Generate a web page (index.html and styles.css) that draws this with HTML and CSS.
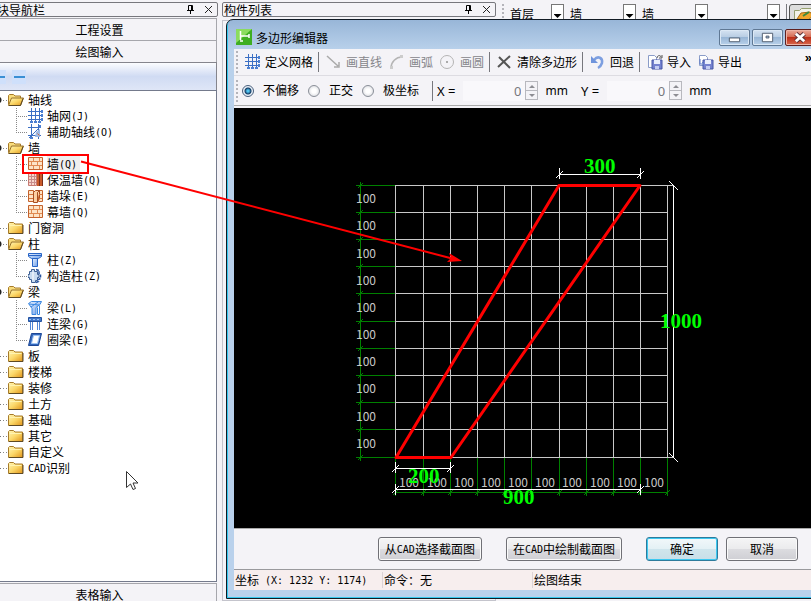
FILE: index.html
```html
<!DOCTYPE html>
<html lang="zh-CN">
<head>
<meta charset="utf-8">
<title>多边形编辑器</title>
<link rel="stylesheet" href="styles.css">
</head>
<body>
<svg class="defs" aria-hidden="true">
  <defs>
    <linearGradient id="gold" x1="0" y1="0" x2="1" y2="1"><stop offset="0" stop-color="#fff6b8"/><stop offset=".5" stop-color="#fbd768"/><stop offset="1" stop-color="#e0941a"/></linearGradient>
    <linearGradient id="blue" x1="0" y1="0" x2="1" y2="1"><stop offset="0" stop-color="#e6f1ff"/><stop offset="1" stop-color="#6f9fe8"/></linearGradient>
    <symbol id="closed" viewBox="0 0 16 16"><path d="M.5 13.500V3.500l1-1h4l1.500 1.500h7.500v9.500z" fill="url(#gold)" stroke="#a77b2a"/><path d="M1.500 5.500h12" stroke="#fff3b0"/><path d="M1 13.500h14V5" fill="none" stroke="#5e4a24"/></symbol>
    <symbol id="open" viewBox="0 0 16 16"><path d="M.5 12.500V3.500l1-1h4l1.500 1.500h5.500v2" fill="#f8dc7c" stroke="#a77b2a"/><path d="M.5 13.500l3-7.500h12l-3 7.500z" fill="url(#gold)" stroke="#96702a"/><path d="M1 13.500h11.500l2.500-7" fill="none" stroke="#5e4a24"/></symbol>
    <symbol id="grid" viewBox="0 0 16 16"><path d="M0 3.500h14M0 7.500h14M0 11.500h14M3.500 0v15M7.500 0v15M11.500 0v15" stroke="#3b6fc4" fill="none"/><path d="M13 2h2v3h-2zM13 6h2v3h-2zM13 10h2v3h-2zM2 13h3v2H2zM6 13h3v2H6zM10 13h3v2h-3z" fill="#4b7fd2"/></symbol>
    <symbol id="aux" viewBox="0 0 16 16"><path d="M0 3.500h13M0 11.500h13M3.500 0v15M10.500 0v15M1 14L12 3" stroke="#3b6fc4" fill="none"/><path d="M8 8l4-3v8H7z" fill="#9db9e4"/><path d="M9.500 9.500l2 2" stroke="#d0693c"/><path d="M2 13h3v2H2zM11 1h2v3h-2z" fill="#4b7fd2"/></symbol>
    <symbol id="brick" viewBox="0 0 16 16"><path d="M.5 1.500h14v12H.5z" fill="#fde3c6" stroke="#c4622c"/><path d="M1 5.500h13M1 9.500h13M5.500 2v3M11.500 2v3M3.500 6v3M9.500 6v3M5.500 10v3M11.500 10v3" stroke="#e08a52" fill="none"/></symbol>
    <symbol id="insul" viewBox="0 0 16 16"><path d="M.5 1.500h8v12h-8z" fill="#f7d6cc" stroke="#c77a72"/><path d="M1 4.500h7M1 7.500h7M1 10.500h7M3.500 2v11M6.500 2v11" stroke="#c88c8c"/><path d="M9 1h2v13H9zM12 1h2v13h-2z" fill="#c95b2c"/><path d="M11.500 1v13M14.500 1v13" stroke="#7a2e1a"/></symbol>
    <symbol id="pier" viewBox="0 0 16 16"><path d="M.5 2.500h5v11h-5zM10.500 2.500h4v11h-4z" fill="#fde3c6" stroke="#c4622c"/><path d="M5.500 4.500l2-2h4l-2 2v10h-4zM9.500 4.500l2-2v9" fill="#fbd0a4" stroke="#a94e22"/><path d="M1 6.500h4M1 10.500h4M11 6.500h3M11 10.500h3" stroke="#d87840"/></symbol>
    <symbol id="column" viewBox="0 0 16 16"><path d="M.5 1.500h13v3l-3 2h-7l-3-2z" fill="url(#blue)" stroke="#2764c6"/><path d="M4.500 6.500h5v8h-5z" fill="url(#blue)" stroke="#2764c6"/><path d="M1 3.500h12" stroke="#2764c6"/></symbol>
    <symbol id="tie" viewBox="0 0 16 16"><path d="M3.500 1.500h3v2h3v3h1.500v3H9.500v3h-2v2h-4v-3h-2v-2H0v-3h1.500v-3h2z" fill="#c9dbf0" stroke="#3d5f94"/><path d="M8 1.500l3 1v3l1.500 1v4l-2 1v2l-2.500 1" stroke="#24529f" stroke-width="1.500" stroke-dasharray="3 1" fill="none"/><path d="M5 4v8" stroke="#fff" fill="none"/></symbol>
    <symbol id="beam" viewBox="0 0 16 16"><path d="M.5 3.500l3-2h10l-1.500 3-4 3v7h-4v-6z" fill="url(#blue)" stroke="#3a87e0"/><path d="M1 4l10 1M9.500 7.500v7h2v-9M3 7l7-5" stroke="#3a87e0" fill="none"/></symbol>
    <symbol id="link" viewBox="0 0 16 16"><path d="M.5 1.500h13v4H.5z" fill="#3f77cb" stroke="#24529f"/><path d="M1 3.500h12" stroke="#9cc2f2" stroke-dasharray="2 2"/><path d="M2.500 6v8M4.500 6v8M9.500 6v8M11.500 6v8" stroke="#4f87d8"/></symbol>
    <symbol id="ring" viewBox="0 0 16 16"><path d="M3.500 1.500h10l-3 12H.5z" fill="#3468bd" stroke="#1c4796"/><path d="M5.500 3.500h6l-2 8h-6z" fill="#fff" stroke="#9cc2f2"/></symbol>
    <symbol id="pin" viewBox="0 0 9 9"><path d="M2.500 5V.5h4V5M5.500 1v4M1 5.500h7M4.500 6v3" stroke="#000" fill="none"/></symbol>
    <symbol id="shut" viewBox="0 0 9 9"><path d="M1 1l7 7M8 1L1 8" stroke="#222" fill="none"/></symbol>
    <symbol id="disk" viewBox="0 0 16 16"><path d="M5 6h10v9H5z" fill="#7582cf" stroke="#4656a6"/><path d="M7 6h6v4H7z" fill="#e8eefc"/><path d="M8 12h4v3H8z" fill="#c4cdf2"/></symbol>
  </defs>
</svg>
<div class="app">
  <aside class="sidebar">
    <header class="panel-head"><span>模块导航栏</span>
      <button class="tiny" aria-label="固定"><svg><use href="#pin"/></svg></button><button class="tiny" aria-label="关闭"><svg><use href="#shut"/></svg></button></header>
    <button class="section">工程设置</button>
    <button class="section">绘图输入</button>
    <div class="treebar"><button class="fold" aria-label="展开"></button><button class="fold" aria-label="折叠"></button></div>
    <nav class="tree">
      <ul>
        <li><div class="row opened"><i></i><svg><use href="#open"/></svg><span>轴线</span></div>
          <ul>
            <li><svg><use href="#grid"/></svg><span>轴网<kbd>(J)</kbd></span></li>
            <li><svg><use href="#aux"/></svg><span>辅助轴线<kbd>(O)</kbd></span></li>
          </ul></li>
        <li><div class="row opened"><i></i><svg><use href="#open"/></svg><span>墙</span></div>
          <ul>
            <li><svg><use href="#brick"/></svg><span class="picked">墙<kbd>(Q)</kbd></span></li>
            <li><svg><use href="#insul"/></svg><span>保温墙<kbd>(Q)</kbd></span></li>
            <li><svg><use href="#pier"/></svg><span>墙垛<kbd>(E)</kbd></span></li>
            <li><svg><use href="#brick"/></svg><span>幕墙<kbd>(Q)</kbd></span></li>
          </ul></li>
        <li><div class="row"><i></i><svg><use href="#closed"/></svg><span>门窗洞</span></div></li>
        <li><div class="row opened"><i></i><svg><use href="#open"/></svg><span>柱</span></div>
          <ul>
            <li><svg><use href="#column"/></svg><span>柱<kbd>(Z)</kbd></span></li>
            <li><svg><use href="#tie"/></svg><span>构造柱<kbd>(Z)</kbd></span></li>
          </ul></li>
        <li><div class="row opened"><i></i><svg><use href="#open"/></svg><span>梁</span></div>
          <ul>
            <li><svg><use href="#beam"/></svg><span>梁<kbd>(L)</kbd></span></li>
            <li><svg><use href="#link"/></svg><span>连梁<kbd>(G)</kbd></span></li>
            <li><svg><use href="#ring"/></svg><span>圈梁<kbd>(E)</kbd></span></li>
          </ul></li>
        <li><div class="row"><i></i><svg><use href="#closed"/></svg><span>板</span></div></li>
        <li><div class="row"><i></i><svg><use href="#closed"/></svg><span>楼梯</span></div></li>
        <li><div class="row"><i></i><svg><use href="#closed"/></svg><span>装修</span></div></li>
        <li><div class="row"><i></i><svg><use href="#closed"/></svg><span>土方</span></div></li>
        <li><div class="row"><i></i><svg><use href="#closed"/></svg><span>基础</span></div></li>
        <li><div class="row"><i></i><svg><use href="#closed"/></svg><span>其它</span></div></li>
        <li><div class="row"><i></i><svg><use href="#closed"/></svg><span>自定义</span></div></li>
        <li><div class="row"><i></i><svg><use href="#closed"/></svg><span><kbd>CAD</kbd>识别</span></div></li>
      </ul>
    </nav>
    <button class="section">表格输入</button>
  </aside>
  <section class="list-panel">
    <header class="panel-head"><span>构件列表</span>
      <button class="tiny" aria-label="固定"><svg><use href="#pin"/></svg></button><button class="tiny" aria-label="关闭"><svg><use href="#shut"/></svg></button></header>
    <div class="list-body"></div>
  </section>
  <section class="work">
    <div class="combos">
      <span class="grip"></span>
      <label class="combo"><select aria-label="楼层"><option>首层</option></select><b></b></label>
      <label class="combo"><select aria-label="构件类别"><option>墙</option></select><b></b></label>
      <label class="combo"><select aria-label="构件类型"><option>墙</option></select><b></b></label>
      <label class="combo"><select aria-label="构件名称"><option></option></select><b></b></label>
      <span class="rule"></span>
      <button class="edit" aria-label="编辑"><svg viewBox="0 0 22 20"><path d="M1.500 4.500h5l2-2h11v12h-18z" fill="#f2f2e8" stroke="#96a070"/><path d="M4 13l4-6 9-1 3 4-5 4z" fill="#f0a52c" stroke="#a86a12"/><path d="M10 10l6-4" stroke="#3b8a3b" stroke-width="2"/></svg></button>
    </div>
  </section>

  <section class="dialog" role="dialog" aria-label="多边形编辑器">
    <header class="title">
      <svg class="logo" viewBox="0 0 16 16"><path d="M0 0h16v16H0z" fill="#3fae22"/><path d="M0 0h16L0 14z" fill="#8bdc5e"/><path d="M4.500 2v9M5 7h8M4 12h3M13 5v4" stroke="#fff" stroke-width="1.500" fill="none"/></svg>
      <h1>多边形编辑器</h1>
      <div class="winbtns">
        <button aria-label="最小化"><svg viewBox="0 0 30 16"><path d="M9.500 8.500h11v4h-11z" fill="#fff" stroke="#4c5a6c"/></svg></button>
        <button aria-label="最大化"><svg viewBox="0 0 30 16"><path d="M9.500 3.500h11v9h-11z" fill="#fff" stroke="#4c5a6c"/><path d="M13.500 6.500h3v2h-3z" fill="#a9c1dc" stroke="#4c5a6c"/></svg></button>
        <button class="close" aria-label="关闭"><svg viewBox="0 0 30 16"><path d="M10 4l9 8M19 4l-9 8" stroke="#5a3038" stroke-width="5"/><path d="M10 4l9 8M19 4l-9 8" stroke="#fff" stroke-width="3"/></svg></button>
      </div>
    </header>
    <div class="client">
      <div class="tools">
        <span class="grip"></span>
        <button><svg><use href="#grid"/></svg>定义网格</button>
        <span class="rule"></span>
        <button disabled><svg viewBox="0 0 16 16"><path d="M1 2l11 10M13 8v5H8" stroke="#aaa" stroke-width="1.500" fill="none"/></svg>画直线</button>
        <button disabled><svg viewBox="0 0 16 16"><path d="M2 14C2 8 7 3 13 3" stroke="#b4b4b4" stroke-width="1.500" fill="none"/><path d="M1 12h3v3H1zM11 1h3v3h-3z" fill="#ccc"/></svg>画弧</button>
        <button disabled><svg viewBox="0 0 16 16"><circle cx="7" cy="8" r="6.500" stroke="#b4b4b4" fill="none"/><path d="M6 7h2v2H6z" fill="#aaa"/></svg>画圆</button>
        <span class="rule"></span>
        <button><svg viewBox="0 0 16 16"><path d="M2 3l11 11M13 2L1 13" stroke="#555" stroke-width="2" fill="none"/></svg>清除多边形</button>
        <span class="rule"></span>
        <button><svg viewBox="0 0 16 16"><path d="M4 6c4-5 9-2 8 3-1 3-2 4-4 5" stroke="#7d9fe0" stroke-width="2.500" fill="none"/><path d="M1 2v7h7z" fill="#6f94dc"/></svg>回退</button>
        <span class="rule"></span>
        <button><svg viewBox="0 0 16 16"><path d="M1.500 1.500h6l2 2v10h-8z" fill="#fff" stroke="#8a9cc8"/><use href="#disk"/><path d="M10 4c0-3 4-3 4-1M15 1v3h-3" stroke="#555" fill="none"/></svg>导入</button>
        <button><svg viewBox="0 0 16 16"><path d="M1.500 1.500h6l2 2v8h-8z" fill="#fff" stroke="#8a9cc8"/><use href="#disk"/><path d="M2 5v5h4M4 8l2 2-2 2" stroke="#5c7bc8" fill="none"/></svg>导出</button>
        <button class="more" aria-label="更多">»</button>
      </div>
      <form class="tools offset">
        <span class="grip"></span>
        <label><input type="radio" name="m" checked>不偏移</label>
        <label><input type="radio" name="m">正交</label>
        <label><input type="radio" name="m">极坐标</label>
        <span class="rule"></span>
        <label class="num">X = <input type="text" value="0" disabled></label><span class="spin"><button type="button" disabled aria-label="X 增加"></button><button type="button" disabled aria-label="X 减少"></button></span><span class="unit">mm</span>
        <label class="num">Y = <input type="text" value="0" disabled></label><span class="spin"><button type="button" disabled aria-label="Y 增加"></button><button type="button" disabled aria-label="Y 减少"></button></span><span class="unit">mm</span>
      </form>
      <div class="canvas">
        <svg viewBox="234 108 584 420" preserveAspectRatio="xMinYMin meet">
          <g fill="none" shape-rendering="crispEdges">
            <path stroke="#008000" d="M360.500 182v279M356 185.500h39M356 212.500h39M356 239.500h39M356 266.500h39M356 293.500h39M356 321.500h39M356 348.500h39M356 375.500h39M356 402.500h39M356 429.500h39M356 457.500h39M395 492.500h273M395.500 458v38M423.500 458v38M450.500 458v38M477.500 458v38M504.500 458v38M531.500 458v38M559.500 458v38M586.500 458v38M613.500 458v38M640.500 458v38M667.500 458v38"/>
            <path stroke="#008000" d="M358 188l5-5M358 215l5-5M358 242l5-5M358 269l5-5M358 296l5-5M358 324l5-5M358 351l5-5M358 378l5-5M358 405l5-5M358 432l5-5M358 460l5-5M393 495l5-5M421 495l5-5M448 495l5-5M475 495l5-5M502 495l5-5M529 495l5-5M557 495l5-5M584 495l5-5M611 495l5-5M638 495l5-5M665 495l5-5"/>
            <path stroke="#c8c8c8" d="M395 185.500h278M395 212.500h273M395 239.500h273M395 266.500h273M395 293.500h273M395 321.500h273M395 348.500h273M395 375.500h273M395 402.500h273M395 429.500h273M395 457.500h278M395.500 185v273M423.500 185v273M450.500 185v273M477.500 185v273M504.500 185v273M531.500 185v273M559.500 185v273M586.500 185v273M613.500 185v273M640.500 185v273M667.500 185v273"/>
          </g>
          <g class="dim">
            <text x="356" y="203">100</text><text x="356" y="230">100</text><text x="356" y="258">100</text><text x="356" y="285">100</text><text x="356" y="312">100</text><text x="356" y="339">100</text><text x="356" y="366">100</text><text x="356" y="393">100</text><text x="356" y="421">100</text><text x="356" y="448">100</text>
            <text x="399" y="487">100</text><text x="427" y="487">100</text><text x="454" y="487">100</text><text x="481" y="487">100</text><text x="508" y="487">100</text><text x="535" y="487">100</text><text x="562" y="487">100</text><text x="590" y="487">100</text><text x="617" y="487">100</text><text x="644" y="487">100</text>
          </g>
          <path fill="none" stroke="#fff" shape-rendering="crispEdges" d="M559 174.500h82M559.500 168v11M640.500 168v11M556 178l7-7M637 178l7-7M673.500 185v273M669 181l9 9M669 453l9 9M395 468.500h56M395.500 462v11M450.500 462v11M392 472l7-7M447 472l7-7M395 489.500h246M395.500 484v11M640.500 484v11M392 493l7-7M637 493l7-7"/>
          <path fill="none" stroke="#f00" stroke-width="3" stroke-linejoin="round" d="M396 457.500L559 185.500H640L451 457.500z"/>
          <g class="size"><text x="584" y="173">300</text><text x="660" y="328">1000</text><text x="408" y="483">200</text><text x="503" y="504">900</text></g>
        </svg>
      </div>
      <div class="actions">
        <button class="wide">从<kbd>CAD</kbd>选择截面图</button>
        <button class="wide">在<kbd>CAD</kbd>中绘制截面图</button>
        <div class="pair"><button class="ok">确定</button><button>取消</button></div>
      </div>
      <footer class="status">
        <span>坐标<kbd> (X: 1232 Y: 1174)</kbd></span>
        <span>命令：无</span>
        <span>绘图结束</span>
      </footer>
    </div>
  </section>

  <svg class="note" viewBox="0 0 480 280" aria-hidden="true"><path d="M23 155h65v18H23z" fill="none" stroke="#f00" stroke-width="2"/><path d="M81 161.500L452 258.500" stroke="#f00" stroke-width="2"/><path d="M449 253l13 8-15 1 4-4z" fill="#f00"/></svg>
  <svg class="pointer" viewBox="0 0 13 20" aria-hidden="true"><path d="M.5.5v16l4-3.500 2.500 5.500 2.500-1-2.500-5.500h5z" fill="#fff" stroke="#333"/></svg>
</div>
</body>
</html>
```
FILE: styles.css
```css
* { box-sizing: border-box; }
html, body { height: 100%; }
body {
  margin: 0;
  overflow: hidden;
  font: 12px/16px "Noto Sans CJK SC", sans-serif;
  color: #000;
  background: #f4f3f7;
}
button, input, select { font: inherit; color: inherit; margin: 0; padding: 0; border: 0; background: none; }
svg { display: block; flex: none; }
kbd { font: 10px/12px "DejaVu Sans Mono", monospace; white-space: pre; vertical-align: 1px; }
ul { list-style: none; margin: 0; padding: 0; }
.defs { position: absolute; width: 0; height: 0; }
.app { position: relative; display: flex; height: 100%; overflow: hidden; }

/* docked panels */
.sidebar { flex: none; display: flex; flex-direction: column; width: 235px; margin: 0 0 -4px -17px; padding-top: 2px; }
.panel-head {
  display: flex;
  align-items: center;
  height: 15px;
  flex: none;
  padding: 0 4px 0 1px;
  border: 1px solid #77777d;
  border-radius: 2px;
}
.panel-head span { flex: 1; }
.tiny { width: 9px; height: 9px; margin-left: 9px; }
.tiny svg { width: 9px; height: 9px; }
.section {
  flex: none;
  height: 22px;
  margin-right: 1px;
  border-top: 1px solid #a6a6ac;
  border-right: 1px solid #a6a6ac;
  text-align: center;
}
.section:first-of-type { margin-top: 1px; }
.tree + .section { margin-top: 1px; }
.treebar {
  flex: none;
  display: flex;
  gap: 6px;
  align-items: center;
  height: 28px;
  padding-left: 9px;
  margin-right: 1px;
  border-top: 1px solid #85858d;
  border-right: 1px solid #85858d;
  background: linear-gradient(#fbfcff, #d0dbf3 50%, #dfe6f7);
}
.fold { width: 14px; height: 14px; background: linear-gradient(#3a8fd4, #3a8fd4) center / 11px 2px no-repeat #cfe0fb; }
.tree {
  flex: 1;
  min-height: 0;
  margin-right: 1px;
  padding: 1px 0 0 10px;
  background: #fff;
  border: 1px solid #747a8c;
}
.row, .tree li li { display: flex; align-items: center; height: 16px; white-space: nowrap; }
.tree svg { width: 16px; height: 16px; margin-right: 4px; }
.row i {
  width: 14px;
  height: 9px;
  background: linear-gradient(#777, #777) 4px 4px / 3px 1px no-repeat, repeating-linear-gradient(90deg, #888 0 1px, #fff 1px 3px) 9px 4px / 5px 1px no-repeat;
}
.row.opened i { background: radial-gradient(circle at 4px 4px, #222 3px, transparent 4px), repeating-linear-gradient(90deg, #888 0 1px, #fff 1px 3px) 9px 4px / 5px 1px no-repeat; }
.tree li li { padding-left: 22px; }
.tree li li::before {
  content: "";
  width: 12px;
  height: 16px;
  background: repeating-linear-gradient(#888 0 1px, #fff 1px 2px) 0 0 / 1px 16px no-repeat, repeating-linear-gradient(90deg, #888 0 1px, #fff 1px 2px) 0 8px / 11px 1px no-repeat;
}
.tree li li:last-child::before { background-size: 1px 8px, 11px 1px; }
.tree li li svg { margin-right: 3px; }
.picked { background: #efefef; padding-right: 3px; }
.list-panel { flex: none; display: flex; flex-direction: column; width: 274px; margin-left: 4px; padding-top: 2px; }
.list-body { flex: 1; margin-top: 3px; border: 1px solid #c4c4cc; }
.work { flex: 1; min-width: 0; }

.combos { display: flex; align-items: flex-start; gap: 6px; padding: 4px 0 0 6px; height: 30px; width: 340px; }
.combos .grip { height: 20px; }
.combo { display: flex; width: 66px; height: 22px; flex: none; }
.combo:first-of-type { width: 54px; }
.combo select { flex: 1; min-width: 0; height: 20px; appearance: none; }
.combo b { flex: none; width: 13px; height: 22px; border: 1px solid #777; background: #fff; }
.combo b::after { content: ""; display: block; margin: 9px auto 0; width: 8px; height: 4px; background: #000; clip-path: polygon(0 0, 100% 0, 50% 100%); }
.combos .rule { height: 20px; margin: 0; }
.edit { width: 30px; height: 24px; margin-left: -4px; border: 1px solid #555; border-radius: 3px; background: #ddd; }
.edit svg { width: 22px; height: 20px; margin-left: 3px; }

/* floating editor window */
.dialog {
  position: absolute;
  left: 226px;
  right: -15px;
  top: 19px;
  bottom: 2px;
  display: flex;
  flex-direction: column;
  padding: 0 7px 8px;
  border: 1px solid #111a24;
  border-radius: 7px 7px 0 0;
  background: linear-gradient(#98b6d8, #b9d1eb 30px, #b9d1ec);
  box-shadow: inset 1px -1px 0 #35c8ee;
}
.title { flex: none; display: flex; align-items: flex-start; height: 29px; padding-left: 2px; }
.logo { width: 16px; height: 16px; margin-top: 9px; }
h1 { flex: 1; margin: 10px 0 0 4px; font-size: 12px; line-height: 16px; font-weight: 400; }
.winbtns { display: flex; gap: 2px; margin-top: 9px; }
.winbtns button {
  width: 31px;
  height: 17px;
  border: 1px solid #5f7894;
  border-radius: 2px;
  background: linear-gradient(#d5e3f2, #b7cce3 48%, #98b6d6 50%, #b9d1ea);
  box-shadow: inset 0 0 0 1px #dbe8f5;
}
.winbtns svg { width: 29px; height: 15px; }
.winbtns .close { width: 33px; border-color: #5e2020; background: linear-gradient(#eba99a, #d4684f 48%, #bd2f18 50%, #d9684e); box-shadow: inset 0 0 0 1px #eeb3a5; }
.client { flex: 1; min-height: 0; display: flex; flex-direction: column; background: #f4f3f7; }
.tools { flex: none; display: flex; align-items: center; height: 27px; padding-left: 2px; border-bottom: 1px solid #dddce2; white-space: nowrap; }
.grip { flex: none; width: 2px; height: 22px; background: repeating-linear-gradient(#b4b4ba 0 2px, transparent 2px 4px); }
.rule { flex: none; width: 1px; height: 20px; margin: 0 0 0 5px; background: #77777d; }
.tools button { display: flex; align-items: center; flex: none; }
.tools > button { margin-left: 7px; gap: 4px; }
.tools > button svg { width: 16px; height: 16px; }
.tools button:disabled { color: #85858a; }
.tools > .more { margin: 0 6px 8px auto; font: 700 13px/16px "Liberation Sans", sans-serif; }
.offset { height: 30px; border-bottom-color: #aaa; margin-bottom: 2px; font-family: "Noto Sans", "Noto Sans CJK SC", sans-serif; }
.offset label { display: flex; align-items: center; }
input[type="radio"] {
  appearance: none;
  width: 12px;
  height: 12px;
  margin: 0 9px;
  border: 1px solid #8a8f98;
  border-radius: 50%;
  background: radial-gradient(#fff 30%, #d0d2d8);
}
.grip + label input[type="radio"] { margin-left: 4px; }
input[type="radio"]:checked { border-color: #4a5f7c; background: radial-gradient(circle, #4fc4f0 1px, #143a63 3px, #e8f0f8 4px); }
.offset .rule { margin-left: 13px; }
.num { margin-left: 4px; gap: 8px; font-size: 13px; }
.unit + .num { margin-left: 13px; }
.num input { width: 62px; height: 20px; padding-right: 4px; text-align: right; color: #77777d; background: #f9f8fb; }
.spin { display: flex; flex-direction: column; width: 13px; height: 19px; border: 1px solid #b8b8be; }
.spin button { flex: 1; width: 11px; justify-content: center; }
.spin button + button { border-top: 1px solid #b8b8be; }
.spin button::after { content: ""; border: 3px solid transparent; border-top: 0; border-bottom-color: #8d8d93; }
.spin button + button::after { transform: rotate(180deg); }
.unit { margin-left: 7px; }
.canvas { flex: 1; min-height: 0; background: #000; }
.canvas svg { width: 100%; height: 100%; }
.dim { font: 12px "Noto Sans CJK SC", sans-serif; fill: #c8c8c8; }
.size { font: 700 21px "Liberation Serif", serif; fill: #0f0; }
.actions {
  flex: none;
  display: flex;
  justify-content: flex-end;
  align-items: center;
  gap: 24px;
  height: 41px;
  padding-right: 20px;
  border-top: 1px solid #aaa;
}
.actions button {
  min-width: 72px;
  height: 24px;
  padding: 0 6px;
  border: 1px solid #707076;
  border-radius: 3px;
  background: linear-gradient(#f5f5f6, #ebebed 48%, #dcdce0 50%, #cfcfd4);
  box-shadow: inset 0 0 0 1px #fafafa;
}
.pair { display: flex; gap: 8px; }
.actions .ok { border-color: #2d7b9c; background: linear-gradient(#f2f8fa, #e4f1f5 48%, #d0e5ec 50%, #c8dfe8); box-shadow: inset 0 0 0 1px #3cc8f0; }
.status { flex: none; display: grid; grid-template-columns: 149px 150px 1fr; align-items: center; height: 21px; border-top: 1px solid #99999d; background: #f7eeee; white-space: nowrap; }
.status span { padding-left: 1px; border-right: 1px solid #ddd3d5; }

/* annotation and mouse pointer drawn over everything */
.note { position: absolute; left: 0; top: 0; width: 480px; height: 280px; pointer-events: none; }
.pointer { position: absolute; left: 126px; top: 471px; width: 13px; height: 20px; pointer-events: none; }
```
